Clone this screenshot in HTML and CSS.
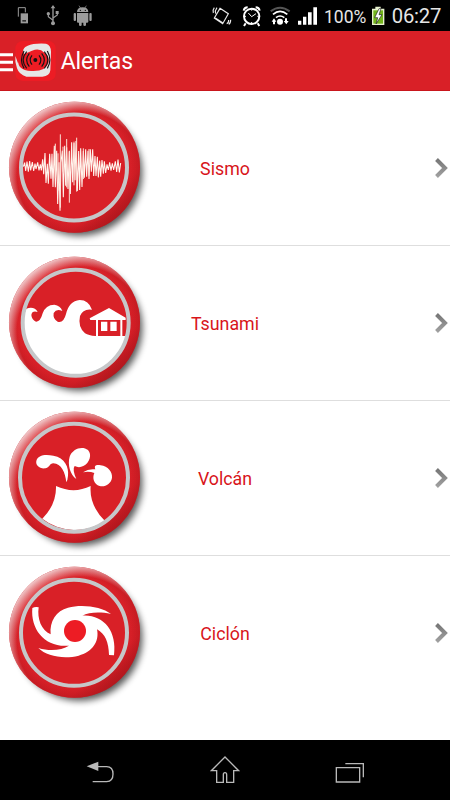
FILE: index.html
```html
<!DOCTYPE html>
<html lang="es">
<head>
<meta charset="utf-8">
<title>Alertas</title>
<link rel="stylesheet" href="styles.css">
</head>
<body>
<svg class="defs" width="0" height="0" aria-hidden="true">
  <defs>
    <linearGradient id="rim" x1="0.12" y1="0.08" x2="0.9" y2="0.95">
      <stop offset="0" stop-color="#e0474b"/><stop offset="0.2" stop-color="#d92229"/>
      <stop offset="0.78" stop-color="#d61f27"/><stop offset="1" stop-color="#9c1318"/>
    </linearGradient>
    <radialGradient id="edge"><stop offset="0.86" stop-color="#b5161d" stop-opacity="0"/><stop offset="1" stop-color="#b5161d" stop-opacity="0.5"/></radialGradient>
    <radialGradient id="shine" gradientUnits="userSpaceOnUse" cx="243" cy="242" r="228">
      <stop offset="0.84" stop-color="#fff" stop-opacity="0"/><stop offset="1" stop-color="#fff" stop-opacity="0.75"/>
    </radialGradient>
    <filter id="blur" x="-20%" y="-20%" width="140%" height="140%"><feGaussianBlur stdDeviation="11"/></filter>
    <linearGradient id="arrow" x1="0" y1="0" x2="0" y2="1"><stop offset="0" stop-color="#777"/><stop offset="1" stop-color="#a0a0a0"/></linearGradient>
    <symbol id="disc" viewBox="0 -12 465 462">
      <circle cx="239" cy="234" r="188" fill="#000" opacity="0.66" filter="url(#blur)"/>
      <circle cx="223.500" cy="217" r="196.500" fill="url(#rim)"/>
      <circle cx="223.500" cy="217" r="196.500" fill="url(#edge)"/>
      <circle cx="223.500" cy="217" r="196.500" fill="url(#shine)"/>
    </symbol>
    <symbol id="chevron" viewBox="0 0 18 24">
      <path d="M4.500 3.500 13 12 4.500 20.500" fill="none" stroke="url(#arrow)" stroke-width="4"/>
    </symbol>
  </defs>
</svg>
<div class="screen">
  <div class="status">
    <svg class="status-left" viewBox="0 0 300 93">
      <g fill="#9b9b9b">
        <path d="M62 40h22v30H62z"/><path d="M55 50V23h21v14" fill="none" stroke="#9b9b9b" stroke-width="3"/><path d="M67 60h11v5H67z" fill="#333"/>
        <path d="M159 15l-7 10h5v43h4V25h5z"/><circle cx="159" cy="70" r="6"/>
        <path d="M159 61l-14-11V41M159 54l13-9v-9" fill="none" stroke="#9b9b9b" stroke-width="3.500"/><circle cx="145" cy="41" r="5"/><path d="M167 33h9v9h-9z"/>
        <path d="M231 36c0-9 6-14 17-14s17 5 17 14zM231 39h34v26q0 3-4 3h-3v7q0 3-4 3t-4-3v-7h-5v7q0 3-4 3t-4-3v-7h-3q-3 0-3-3z"/>
        <rect x="221" y="39" width="7" height="24" rx="3"/><rect x="268" y="39" width="7" height="24" rx="3"/>
        <path d="M237 17l5 8M259 17l-5 8" stroke="#9b9b9b" stroke-width="2"/><circle cx="241" cy="31" r="2" fill="#000"/><circle cx="256" cy="31" r="2" fill="#000"/>
      </g>
    </svg>
    <svg class="status-icons" viewBox="30 0 330 93">
      <g fill="none" stroke="#e9e9e9" stroke-width="3.500">
        <path d="M60 25l25 16-17 30-25-17zM46 54l24 16M40 39q-3-9 3-16M47 41q-3-9 4-18M80 71q6-1 6-11M86 73q6-3 6-14"/>
      </g>
      <g fill="none" stroke="#fff" stroke-width="6">
        <circle cx="155" cy="49" r="23"/><path d="M131 32q2-10 12-10M179 32q-2-10-12-10M137 70l-5 8M173 70l5 8"/>
        <path d="M145 39l10 11 13-9" stroke-width="3"/>
        <path d="M155 28v4M155 66v4M134 49h4M172 49h4" stroke-width="3"/>
        <path d="M212 34q28-22 57 0" stroke="#555"/><path d="M219 43q21-18 43 0M228 53q12-10 25 0" stroke-width="5"/>
      </g>
      <g fill="#fff"><circle cx="240" cy="65" r="9"/><path d="M215 65l7-10 7 10h-4v8h-6v-8zM251 63h4v-8h6v8h5l-7 10z"/>
      <path d="M294 62h10v12h-10zM309 50h10v24h-10zM324 37h11v37h-11zM340 22h11v52h-11z"/></g>
    </svg>
    <span class="percent">100%</span>
    <svg class="battery" viewBox="514 15 44 63">
      <path d="M517 26h10v-6h16v6h11v49h-37z" fill="#e8f3d0"/><path d="M521 31h29v40h-29z" fill="#73b51b"/>
      <path d="M538 26l-13 27h9l-5 19 18-28h-9l6-18z" fill="#fff" stroke="#222" stroke-width="2"/>
    </svg>
    <span class="clock">06:27</span>
  </div>
  <header class="bar">
    <svg class="app" viewBox="0 93 170 180">
      <path d="M0 164h39M0 187h39M0 209h39" stroke="#fff" stroke-width="9"/>
      <rect x="46" y="123" width="121" height="120" rx="22" fill="#ed1c24"/>
      <path d="M46 168Q50 178 54 190L63 165Q67 143 83 137Q101 129 138 131Q153 135 153 156L151 211Q149 229 127 230L79 230Q57 224 51 205Q44 188 46 168z" fill="#e6e6e6"/>
      <path d="M51 150Q51 190 60 201Q74 215 100 213Q139 213 146 186Q148 167 133 158Q119 143 96 152L73 162Q66 158 72 142z" fill="#ed1c24"/>
      <circle cx="106" cy="180" r="6" fill="#111"/>
      <g fill="none" stroke="#151515" stroke-width="3.500">
        <path d="M96 166q-11 14 0 28M88 160q-16 20 0 40M80 155q-21 25 0 50M72 153q-15 27 0 52"/>
        <path d="M117 166q11 14 0 28M125 160q16 20 0 40M133 155q21 25 0 50M142 153q15 27 0 52"/>
      </g>
    </svg>
    <h1>Alertas</h1>
  </header>
  <main class="list">
    <div class="row">
      <svg class="button" viewBox="0 -12 465 462">
        <use href="#disc" x="0" y="-12" width="465" height="462"/>
        <circle cx="222" cy="217.500" r="159" fill="#d92027" stroke="#c6c7c9" stroke-width="12"/>
        <path d="M70 215l4-12 3 25 4-28 4 30 4-32 3 28 5-25 4 27 4-22 3 16 5-20 4 24 4-18 3 18 4-33 3 45 4-64 3 90 4-58 3 60 4-90 4 75 3-75 3 100 4-124 3 125 4-110 3 160 4-125 3 145 3-145 4-35 3 140 4-155 3 120 3-115 4 125 4-115 3 130 4-155 3 120 4-118 3 112 3-118 4 150 4-120 3 117 3-125 4 116 4-108 3 80 4-85 3 82 4-78 3 85 4-89 3 67 4-67 3 80 4-60 3 60 4-58 3 62 4-50 3 48 4-50 4 41 3-37 4 35 4-26 4 17 4-23 4 25 4-22 4 20 5-26 4 32 4-37 4 38 4-28" fill="none" stroke="#fff4ed" stroke-width="3.200"/>
        <path d="M166 146v104M174 175v112M181 118v220M189 155v75M200 132v145M208 170v153M222 140v131M230 128v162M250 160v92M267 162v80" stroke="#fbe1d6" stroke-width="3" fill="none"/>
      </svg>
      <span class="label">Sismo</span><svg class="next"><use href="#chevron"/></svg>
    </div>
    <div class="row">
      <svg class="button" viewBox="0 -12 465 462">
        <use href="#disc" x="0" y="-12" width="465" height="462"/>
        <circle cx="227" cy="218.500" r="159" fill="#d92027"/>
        <path d="M79 176Q103 168 113 186Q96 181 94 195Q95 209 108 215Q121 216 128 190Q137 164 163 164Q181 166 187 183Q169 175 161 189Q158 207 173 215Q191 220 198 192Q207 153 239 150Q266 150 276 179Q249 175 240 198Q233 231 255 250Q266 257 286 258H379A157 157 0 0 1 70 218.500Q70 195 79 176z" fill="#fff"/>
        <path d="M269 205l58-31 50 29v7h-10v49h-79v-49h-17z" fill="#fff"/>
        <path d="M294 210h67v48h-67z" fill="#d92027"/>
        <path d="M303 215h19v28h-19zM331 215h19v28h-19z" fill="#fff"/>
        <circle cx="227" cy="218.500" r="159" fill="none" stroke="#c6c7c9" stroke-width="12"/>
      </svg>
      <span class="label">Tsunami</span><svg class="next"><use href="#chevron"/></svg>
    </div>
    <div class="row">
      <svg class="button" viewBox="0 -12 465 462">
        <use href="#disc" x="0" y="-12" width="465" height="462"/>
        <circle cx="222" cy="218" r="161" fill="#d92027"/>
        <path d="M168 243Q221 268 272 243Q267 301 315 348A161 161 0 0 1 127 341Q170 298 168 243z" fill="#fff"/>
        <path d="M199 232C196 203 184 176 160 175C148 175 150 187 137 190C119 193 106 180 109 168C113 149 137 147 160 152C195 158 207 187 204 212Q203 225 199 232z" fill="#fff"/>
        <path d="M229 222C211 210 202 179 209 155C217 132 246 121 264 135C277 149 269 174 250 183Q237 190 224 183Q216 193 229 222z" fill="#fff"/>
        <path d="M249 202Q266 190 286 193C281 180 290 179 302 181C324 184 338 201 336 218C333 237 315 247 299 243C282 239 276 219 283 204Q267 198 249 202z" fill="#fff"/>
        <circle cx="222" cy="218" r="162" fill="none" stroke="#c6c7c9" stroke-width="12"/>
      </svg>
      <span class="label">Volcán</span><svg class="next"><use href="#chevron"/></svg>
    </div>
    <div class="row">
      <svg class="button" viewBox="0 -12 465 462">
        <use href="#disc" x="0" y="-12" width="465" height="462"/>
        <circle cx="222" cy="218.500" r="159" fill="#d92027" stroke="#c6c7c9" stroke-width="12"/>
        <path d="M116 142C111 177 124 211 152 223C148 184 169 152 204 143C247 132 305 140 333 162C298 154 266 157 247 167C310 163 352 213 342 286L327 285C326 247 316 222 291 208C299 246 276 276 236 287C191 298 139 289 115 264C151 275 186 270 207 257C136 264 91 209 97 144Q106 139 116 142z" fill="#fff"/>
        <circle cx="225" cy="213" r="33" fill="#ed1c24"/>
      </svg>
      <span class="label">Ciclón</span><svg class="next"><use href="#chevron"/></svg>
    </div>
  </main>
  <nav class="nav">
    <svg viewBox="0 0 90 90"><path d="M42 35h26q19 0 19 22t-19 23H26" fill="none" stroke="#b9b9b9" stroke-width="4"/><path d="M8 34l35-14v28z" fill="#b9b9b9"/></svg>
    <svg viewBox="0 0 90 90"><path d="M45 6 86 47H71v35H50V59q0-6-5-6t-5 6v23H20V47H4z" fill="none" stroke="#b9b9b9" stroke-width="4"/></svg>
    <svg viewBox="0 0 90 90"><path d="M4 38h70v43H4zM31 26h54v41" fill="none" stroke="#b9b9b9" stroke-width="4"/></svg>
  </nav>
</div>
</body>
</html>
```
FILE: styles.css
```css
* { box-sizing: border-box; }
body { margin: 0; background: #fff; font-family: Roboto, sans-serif; }
svg { display: block; flex: none; }
.defs { position: absolute; }
.screen { width: 450px; height: 800px; display: flex; flex-direction: column; overflow: hidden; }
.status { height: 31px; flex: none; display: flex; background: #000; color: #e6e6e6; }
.status-left { width: 100px; height: 31px; }
.status-icons { width: 110px; height: 31px; margin-left: 110px; }
.percent { width: 46px; padding-left: 4px; font-size: 17.5px; line-height: 34px; white-space: nowrap; }
.battery { width: 14.7px; height: 21px; margin: 5px 0 0 5px; }
.clock { margin-left: 6px; font-size: 20.3px; line-height: 32px; letter-spacing: -0.2px; }
.bar { height: 60px; flex: none; display: flex; background: #d92027; border-bottom: 1px solid #c9161d; }
.app { width: 56.7px; height: 60px; }
.bar h1 { margin: 0 0 0 4px; color: #fff; font-size: 23px; font-weight: 400; line-height: 62px; letter-spacing: -0.1px; }
.list { flex: 1; }
.row { height: 155px; display: grid; grid-template-columns: 155px 140px 155px; align-items: center; border-bottom: 1px solid #dedede; }
.row:last-child { border-bottom-color: transparent; }
.button { width: 155px; height: 154px; }
.label { text-align: center; color: #d8141a; font-size: 17.8px; line-height: 24px; padding-top: 2px; }
.next { width: 18px; height: 24px; justify-self: end; }
.nav { height: 60px; flex: none; display: flex; justify-content: space-between; align-items: center; background: #000; padding: 0 85px 0 84px; }
.nav svg { width: 30px; height: 30px; }
```
